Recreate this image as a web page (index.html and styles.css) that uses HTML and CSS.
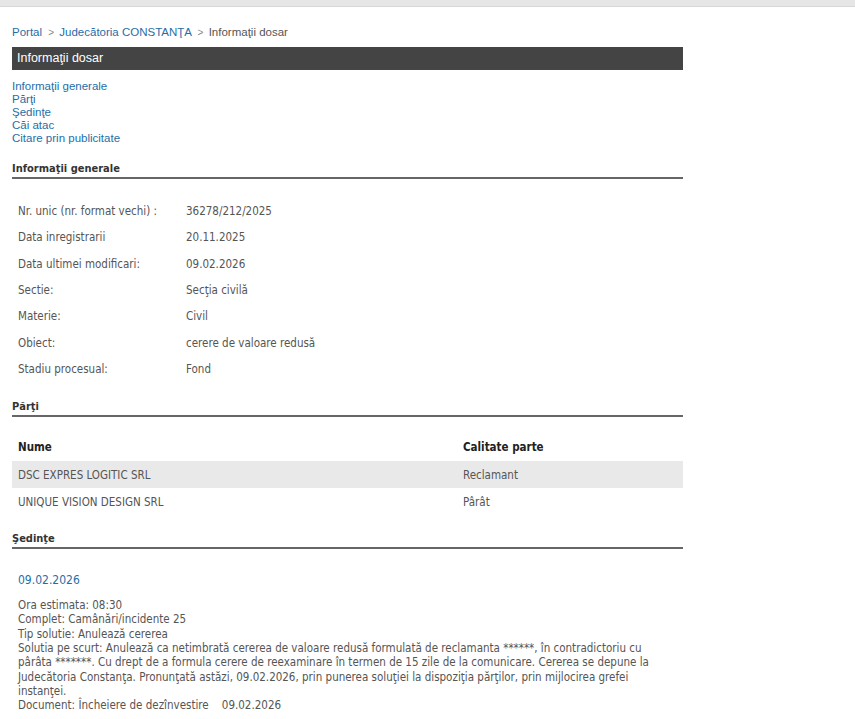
FILE: index.html
```html
<!DOCTYPE html>
<html lang="ro">
<head>
  <meta charset="UTF-8">
  <title>Informaţii dosar</title>
  <link rel="stylesheet" href="styles.css">
</head>
<body>
  <div class="topbar"></div>
  <div class="page">
    <div class="breadcrumb">
      <a href="#">Portal</a> <span class="sep">&gt;</span> <a href="#">Judecătoria CONSTANŢA</a> <span class="sep">&gt;</span> <span class="current">Informaţii dosar</span>
    </div>
    <div class="title-bar">Informaţii dosar</div>

    <div class="toc">
      <a href="#generale">Informaţii generale</a>
      <a href="#parti">Părţi</a>
      <a href="#sedinte">Şedinţe</a>
      <a href="#cai">Căi atac</a>
      <a href="#citare">Citare prin publicitate</a>
    </div>

    <h2 class="section-title" id="generale">Informaţii generale</h2>
    <table class="info">
      <tr><td class="label">Nr. unic (nr. format vechi) :</td><td>36278/212/2025</td></tr>
      <tr><td class="label">Data inregistrarii</td><td>20.11.2025</td></tr>
      <tr><td class="label">Data ultimei modificari:</td><td>09.02.2026</td></tr>
      <tr><td class="label">Sectie:</td><td>Secţia civilă</td></tr>
      <tr><td class="label">Materie:</td><td>Civil</td></tr>
      <tr><td class="label">Obiect:</td><td>cerere de valoare redusă</td></tr>
      <tr><td class="label">Stadiu procesual:</td><td>Fond</td></tr>
    </table>

    <h2 class="section-title" id="parti">Părţi</h2>
    <table class="parti">
      <tr class="head"><th class="col-name">Nume</th><th>Calitate parte</th></tr>
      <tr class="odd"><td>DSC EXPRES LOGITIC SRL</td><td>Reclamant</td></tr>
      <tr><td>UNIQUE VISION DESIGN SRL</td><td>Pârât</td></tr>
    </table>

    <h2 class="section-title" id="sedinte">Şedinţe</h2>
    <div class="sedinta">
      <div class="sedinta-date">09.02.2026</div>
      <div class="sedinta-body">
        Ora estimata: 08:30<br>
        Complet: Camânări/incidente 25<br>
        Tip solutie: Anulează cererea<br>
        Solutia pe scurt: Anulează ca netimbrată cererea de valoare redusă formulată de reclamanta ******, în contradictoriu cu pârâta *******. Cu drept de a formula cerere de reexaminare în termen de 15 zile de la comunicare. Cererea se depune la Judecătoria Constanţa. Pronunţată astăzi, 09.02.2026, prin punerea soluţiei la dispoziţia părţilor, prin mijlocirea grefei instanţei.<br>
        Document: Încheiere de dezînvestire &nbsp;&nbsp;&nbsp;09.02.2026
      </div>
    </div>
  </div>
</body>
</html>
```

FILE: styles.css
```css
body {
  margin: 0;
  background: #fff;
  font-family: "Liberation Sans", Arial, sans-serif;
  font-size: 11.5px;
  color: #555;
}
.topbar {
  height: 6px;
  background: #e6e6e6;
  border-bottom: 1px solid #d6d6d6;
}
.page {
  width: 671px;
  margin-left: 12px;
  padding-bottom: 20px;
}
a {
  color: #1f6ea8;
  text-decoration: none;
}
.breadcrumb {
  margin-top: 18px;
  line-height: 14px;
}
.breadcrumb .sep {
  color: #888;
  font-size: 10px;
  margin: 0 2px 0 3px;
}
.breadcrumb .current {
  color: #555;
}
.title-bar {
  margin-top: 7px;
  height: 23px;
  line-height: 22px;
  background: #444;
  color: #fff;
  font-size: 12.5px;
  padding-left: 5px;
}
.toc {
  margin-top: 10px;
}
.toc a {
  display: block;
  line-height: 13px;
}
.section-title {
  font-family: "DejaVu Sans Condensed", "DejaVu Sans", sans-serif;
  font-size: 11px;
  font-weight: bold;
  color: #333;
  margin: 17px 0 0 0;
  padding-bottom: 2px;
  line-height: 13px;
  border-bottom: 2px solid #666;
}
.info, .parti {
  border-collapse: collapse;
  font-family: "DejaVu Sans Condensed", "DejaVu Sans", sans-serif;
  font-size: 11.5px;
  color: #555;
}
.info {
  margin-top: 19px;
  margin-bottom: 18px;
}
.info td {
  padding: 0 6px;
  height: 26.3px;
}
.info td.label {
  width: 156px;
}
.parti {
  width: 100%;
  margin-top: 16px;
  margin-bottom: 15px;
}
.parti th {
  text-align: left;
  color: #222;
  font-weight: bold;
  height: 28px;
  padding: 0 6px;
}
.parti th.col-name {
  width: 433px;
}
.parti td {
  height: 27px;
  padding: 0 6px;
}
.parti tr.odd td {
  background: #e9e9e9;
}
.sedinta {
  padding: 0 6px;
  font-family: "DejaVu Sans Condensed", "DejaVu Sans", sans-serif;
  font-size: 11.5px;
}
.sedinta-date {
  margin-top: 24px;
  color: #1f6ea8;
  font-size: 12px;
  line-height: 14px;
}
.sedinta-body {
  margin-top: 11px;
  line-height: 14.3px;
  color: #555;
}
```
